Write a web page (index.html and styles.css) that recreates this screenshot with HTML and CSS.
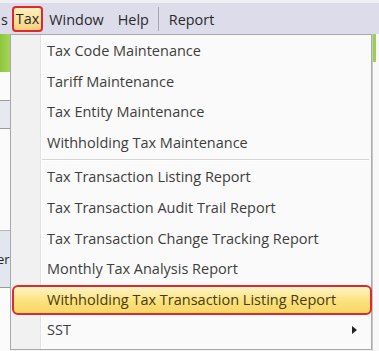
FILE: index.html
```html
<!DOCTYPE html>
<html lang="en">
<head>
  <meta charset="UTF-8" />
  <title>Tax Menu</title>
  <link rel="stylesheet" href="styles.css">
</head>
<body>

  <div class="menubar">
    <span class="bar-item cut">s</span>
    <span class="bar-item active">Tax</span>
    <span class="bar-item first">Window</span>
    <span class="bar-item">Help</span>
    <span class="bar-sep"></span>
    <span class="bar-item">Report</span>
  </div>

  <div class="below">
    <div class="side-left">
      <div class="green"></div>
      <div class="blk white"></div>
      <div class="blk blue"></div>
      <div class="blk white2"></div>
      <div class="blk blue2"><span>eri</span></div>
      <div class="blk white3"></div>
    </div>

    <div class="menu">
      <div class="menu-item">Tax Code Maintenance</div>
      <div class="menu-item">Tariff Maintenance</div>
      <div class="menu-item">Tax Entity Maintenance</div>
      <div class="menu-item">Withholding Tax Maintenance</div>
      <div class="menu-sep"></div>
      <div class="menu-item">Tax Transaction Listing Report</div>
      <div class="menu-item">Tax Transaction Audit Trail Report</div>
      <div class="menu-item">Tax Transaction Change Tracking Report</div>
      <div class="menu-item">Monthly Tax Analysis Report</div>
      <div class="menu-item selected">Withholding Tax Transaction Listing Report</div>
      <div class="menu-item sub">SST <span class="arrow"></span></div>
    </div>

    <div class="side-right">
      <div class="green"></div>
    </div>
  </div>

</body>
</html>
```

FILE: styles.css
```css
body {
  margin: 0;
  width: 379px;
  height: 351px;
  overflow: hidden;
  background: #f4f4f6;
  font-family: 'Open Sans', 'Noto Sans', sans-serif;
  color: #3e3e3e;
}
.menubar {
  height: 31px;
  border-top: 3px solid #f0f0f4;
  background: #dcdcea;
  display: flex;
  align-items: center;
  font-size: 14.4px;
  color: #2a2a2a;
}
.bar-item {
  padding: 0 7px;
  line-height: 24px;
  margin-top: 2px;
}
.bar-item.cut {
  margin-left: -6px;
  padding-right: 4px;
}
.bar-item.active {
  padding: 0 2px;
  height: 22px;
  line-height: 22px;
  margin-top: 0;
  border: 2px solid #e0282c;
  border-radius: 4px;
  background: linear-gradient(#fdf0c0, #f6d27a);
}
.bar-item.first {
  padding-left: 6px;
}
.bar-sep {
  width: 1px;
  height: 24px;
  background: #a8a8b4;
  margin: 0 3px 0 2px;
}
.below {
  display: flex;
  height: 317px;
}
.side-left {
  width: 10px;
  display: flex;
  flex-direction: column;
  font-size: 13px;
}
.side-left .green {
  height: 38px;
  background: linear-gradient(90deg, #8dc63f, #a6d45a);
}
.blk.white {
  height: 28px;
  background: #fbfbfb;
  border-bottom: 1px solid #9a9a9a;
}
.blk.blue {
  height: 27px;
  background: #e6e9f0;
  border-bottom: 1px solid #9a9a9a;
}
.blk.white2 {
  height: 101px;
  background: #fbfbfb;
  border-bottom: 1px solid #b8b8b8;
}
.blk.blue2 {
  height: 56px;
  background: #e2e6ee;
  border-bottom: 1px solid #9a9a9a;
  position: relative;
  overflow: hidden;
}
.blk.blue2 span {
  position: absolute;
  left: -3px;
  top: 19px;
  color: #222;
}
.blk.white3 {
  flex: 1;
  background: #fbfbfb;
}
.menu {
  width: 360px;
  height: 313px;
  border: 1px solid #a9a9a9;
  background: linear-gradient(90deg, #f1f1f1 0, #f1f1f1 29px, #e2e2e2 29px, #e2e2e2 30px, #ffffff 30px, #ffffff 31px, #fafafa 31px);
  padding-top: 1px;
  font-size: 14.5px;
}
.menu-item {
  height: 30.6px;
  line-height: 30px;
  padding-left: 36px;
  position: relative;
  box-sizing: border-box;
}
.menu-item.selected {
  margin: 0 -1px 0 1px;
  padding-left: 33px;
  border: 2px solid #dc2a2e;
  border-radius: 6px;
  line-height: 26px;
  background: linear-gradient(#fef4c4, #fbe27e 55%, #f7d764);
  color: #4a3a10;
}
.menu-sep {
  height: 1px;
  margin: 1px 2px 1px 31px;
  background: #d4d4d4;
  border-bottom: 1px solid #ffffff;
}
.arrow {
  position: absolute;
  right: 14px;
  top: 11px;
  border-left: 5px solid #222;
  border-top: 4px solid transparent;
  border-bottom: 4px solid transparent;
}
.side-right {
  flex: 1;
  background: #f8f8f8;
  border-left: 1px solid #c8c8c8;
}
.side-right .green {
  height: 28px;
  width: 3px;
  background: #9ccf4a;
}
```
